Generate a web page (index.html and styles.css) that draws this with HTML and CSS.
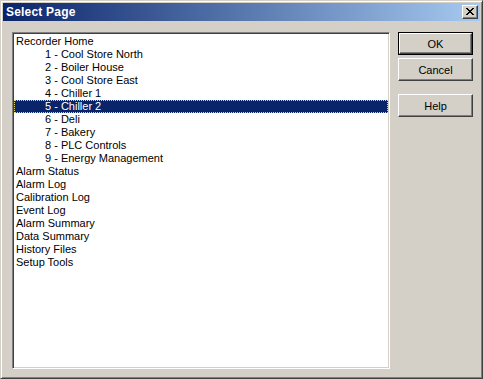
FILE: index.html
```html
<!DOCTYPE html>
<html lang="en">

<head>
    <meta charset="UTF-8">
    <title>Select Page</title>
    <link rel="stylesheet" href="styles.css">
</head>

<body>
    <div class="window">
        <div class="titlebar">
            <span class="title">Select Page</span>
            <button class="close">
                <svg width="8" height="7" viewBox="0 0 8 7">
                    <path d="M0 0h2v1h-2zM6 0h2v1h-2zM1 1h2v1h-2zM5 1h2v1h-2zM2 2h4v1h-4zM3 3h2v1h-2zM2 4h4v1h-4zM1 5h2v1h-2zM5 5h2v1h-2zM0 6h2v1h-2zM6 6h2v1h-2z" fill="#000"/>
                </svg>
            </button>
        </div>
        <div class="content">
            <ul class="list">
                <li>Recorder Home</li>
                <li class="sub">1 - Cool Store North</li>
                <li class="sub">2 - Boiler House</li>
                <li class="sub">3 - Cool Store East</li>
                <li class="sub">4 - Chiller 1</li>
                <li class="sub selected">5 - Chiller 2</li>
                <li class="sub">6 - Deli</li>
                <li class="sub">7 - Bakery</li>
                <li class="sub">8 - PLC Controls</li>
                <li class="sub">9 - Energy Management</li>
                <li>Alarm Status</li>
                <li>Alarm Log</li>
                <li>Calibration Log</li>
                <li>Event Log</li>
                <li>Alarm Summary</li>
                <li>Data Summary</li>
                <li>History Files</li>
                <li>Setup Tools</li>
            </ul>
            <div class="buttons">
                <div class="default"><button class="btn">OK</button></div>
                <button class="btn">Cancel</button>
                <button class="btn help">Help</button>
            </div>
        </div>
    </div>
</body>

</html>
```

FILE: styles.css
```css
* {
    margin: 0;
    padding: 0;
    box-sizing: border-box;
}

body {
    background: #d4d0c8;
    font-family: 'Liberation Sans', Arial, sans-serif;
    font-size: 11px;
}

.window {
    width: 483px;
    height: 379px;
    background: #d4d0c8;
    border: 1px solid;
    border-color: #d4d0c8 #404040 #404040 #d4d0c8;
    box-shadow: inset 1px 1px #fff, inset -1px -1px #808080;
    padding: 2px;
}

.titlebar {
    height: 18px;
    display: flex;
    align-items: center;
    justify-content: space-between;
    padding: 0 2px 0 2px;
    background: linear-gradient(to right, #0a246a, #a6caf0);
}

.title {
    color: #fff;
    font-weight: bold;
    font-size: 12px;
    letter-spacing: 0.2px;
    padding-left: 1px;
}

.close {
    width: 16px;
    height: 14px;
    display: flex;
    align-items: center;
    justify-content: center;
    background: #d4d0c8;
    border: 1px solid;
    border-color: #fff #404040 #404040 #fff;
    box-shadow: inset -1px -1px #808080;
    padding-bottom: 1px;
}

.content {
    display: flex;
    gap: 8px;
    padding: 11px 0 0 9px;
}

.list {
    list-style: none;
    width: 378px;
    height: 337px;
    background: #fff;
    border: 1px solid;
    border-color: #808080 #fff #fff #808080;
    box-shadow: inset 1px 1px #404040, inset -1px -1px #d4d0c8;
    padding: 2px 1px;
    color: #000;
}

.list li {
    height: 13px;
    line-height: 13px;
    padding-left: 2px;
    white-space: nowrap;
}

.list li.sub {
    padding-left: 31px;
}

.list li.selected {
    background: #0a246a;
    color: #fff;
    outline: 1px dotted #e8d870;
    outline-offset: -1px;
}

.buttons {
    display: flex;
    flex-direction: column;
    width: 75px;
    gap: 3px;
}

.btn {
    width: 75px;
    height: 23px;
    font-family: 'Liberation Sans', Arial, sans-serif;
    font-size: 11px;
    color: #000;
    background: #d4d0c8;
    border: 1px solid;
    border-color: #fff #404040 #404040 #fff;
    box-shadow: inset -1px -1px #808080;
}

.default {
    border: 1px solid #000;
    width: 75px;
    height: 23px;
}

.default .btn {
    width: 73px;
    height: 21px;
}

.help {
    margin-top: 10px;
}
```
